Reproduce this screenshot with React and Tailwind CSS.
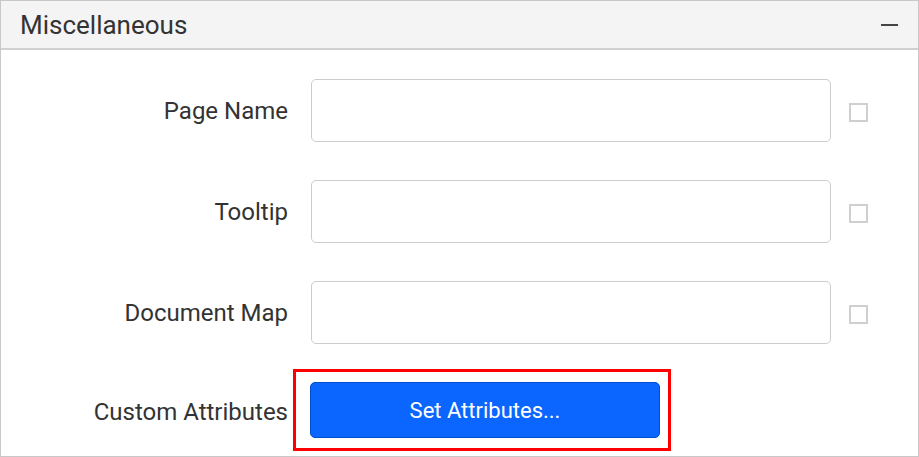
import React from "react";

const rows = ["Page Name", "Tooltip", "Document Map"];

function Field({ label }) {
  return (
    <div className="flex items-center h-[63px]">
      <div className="w-[287px] text-right text-[24px] text-[#333] leading-none">{label}</div>
      <input
        type="text"
        className="ml-[23px] w-[520px] h-[63px] border border-[#cccccc] rounded-[5px] bg-white outline-none"
      />
      <div className="ml-[18px] w-[19px] h-[19px] border-2 border-[#cfcfcf] bg-white mt-[3px]"></div>
    </div>
  );
}

export default function App() {
  return (
    <div
      className="w-[919px] h-[457px] border border-[#c8c8c8] bg-white overflow-hidden"
      style={{ fontFamily: "Roboto, 'Noto Sans', sans-serif" }}
    >
      <div className="h-[49px] bg-[#f4f4f4] border-b-2 border-[#d0d0d0] flex items-center justify-between pl-[19px] pr-[20px]">
        <span className="text-[26px] text-[#333] leading-none mt-[1px]">Miscellaneous</span>
        <span className="w-[17px] h-[2px] bg-[#444]"></span>
      </div>

      <div className="pt-[29px] flex flex-col gap-[38px]">
        {rows.map((r) => (
          <Field key={r} label={r} />
        ))}

        <div className="flex items-center h-[56px] relative">
          <div className="w-[287px] text-right text-[24px] text-[#333] leading-none mt-[3px]">Custom Attributes</div>
          <button className="ml-[22px] w-[350px] h-[56px] rounded-[5px] bg-[#0a66ff] border border-[#0050cc] text-white text-[22px]">
            Set Attributes...
          </button>
          <div className="absolute left-[292px] top-[-13px] w-[378px] h-[82px] border-[3px] border-[#ff0000]"></div>
        </div>
      </div>
    </div>
  );
}
